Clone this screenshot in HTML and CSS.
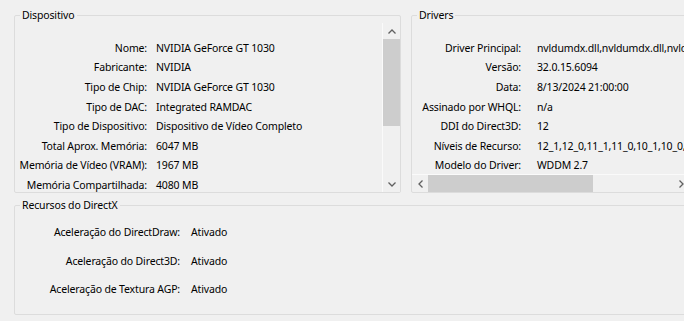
FILE: index.html
```html
<!DOCTYPE html>
<html lang="pt-BR">
<head>
    <meta charset="UTF-8">
    <title>Vídeo</title>
    <link rel="stylesheet" href="styles.css">
</head>
<body>
    <div class="dialog">
        <div class="top">
            <fieldset class="group device">
                <legend>Dispositivo</legend>
                <div class="panel">
                    <div class="rows">
                        <span class="key">Nome:</span><span class="val">NVIDIA GeForce GT 1030</span>
                        <span class="key">Fabricante:</span><span class="val">NVIDIA</span>
                        <span class="key">Tipo de Chip:</span><span class="val">NVIDIA GeForce GT 1030</span>
                        <span class="key">Tipo de DAC:</span><span class="val">Integrated RAMDAC</span>
                        <span class="key">Tipo de Dispositivo:</span><span class="val">Dispositivo de Vídeo Completo</span>
                        <span class="key">Total Aprox. Memória:</span><span class="val">6047 MB</span>
                        <span class="key">Memória de Vídeo (VRAM):</span><span class="val">1967 MB</span>
                        <span class="key">Memória Compartilhada:</span><span class="val">4080 MB</span>
                    </div>
                    <div class="vscroll">
                        <div class="arrow">
                            <svg width="8" height="5" viewBox="0 0 8 5"><path d="M0.5 4.5 L4 1 L7.5 4.5" fill="none" stroke="#606060" stroke-width="1.3"/></svg>
                        </div>
                        <div class="track"><div class="thumb"></div></div>
                        <div class="arrow">
                            <svg width="8" height="5" viewBox="0 0 8 5"><path d="M0.5 0.5 L4 4 L7.5 0.5" fill="none" stroke="#606060" stroke-width="1.3"/></svg>
                        </div>
                    </div>
                </div>
            </fieldset>

            <fieldset class="group drivers">
                <legend>Drivers</legend>
                <div class="panel stack">
                    <div class="rows">
                        <span class="key">Driver Principal:</span><span class="val">nvldumdx.dll,nvldumdx.dll,nvldumdx.dll,nvldumdx.dll</span>
                        <span class="key">Versão:</span><span class="val">32.0.15.6094</span>
                        <span class="key">Data:</span><span class="val">8/13/2024 21:00:00</span>
                        <span class="key">Assinado por WHQL:</span><span class="val">n/a</span>
                        <span class="key">DDI do Direct3D:</span><span class="val">12</span>
                        <span class="key">Níveis de Recurso:</span><span class="val">12_1,12_0,11_1,11_0,10_1,10_0,9_3,9_2,9_1</span>
                        <span class="key">Modelo do Driver:</span><span class="val">WDDM 2.7</span>
                    </div>
                    <div class="hscroll">
                        <div class="arrow">
                            <svg width="5" height="8" viewBox="0 0 5 8"><path d="M4.5 0.5 L1 4 L4.5 7.5" fill="none" stroke="#606060" stroke-width="1.3"/></svg>
                        </div>
                        <div class="track"><div class="thumb"></div></div>
                        <div class="arrow">
                            <svg width="5" height="8" viewBox="0 0 5 8"><path d="M0.5 0.5 L4 4 L0.5 7.5" fill="none" stroke="#606060" stroke-width="1.3"/></svg>
                        </div>
                    </div>
                </div>
            </fieldset>
        </div>

        <fieldset class="group dx">
            <legend>Recursos do DirectX</legend>
            <div class="rows">
                <span class="key">Aceleração do DirectDraw:</span><span class="val">Ativado</span>
                <span class="key">Aceleração do Direct3D:</span><span class="val">Ativado</span>
                <span class="key">Aceleração de Textura AGP:</span><span class="val">Ativado</span>
            </div>
        </fieldset>
    </div>
</body>
</html>
```

FILE: styles.css
```css
body {
    margin: 0;
    background-color: #f0f0f0;
    color: #000;
    font-family: "Noto Sans", "Open Sans", sans-serif;
    font-size: 10.5px;
    letter-spacing: -0.15px;
    overflow: hidden;
}
.dialog {
    width: 700px;
    padding: 8px 0 0 14px;
}
.top {
    display: flex;
    gap: 10px;
}
.group {
    box-sizing: border-box;
    margin: 0;
    padding: 0;
    min-width: 0;
    border: 1px solid #dcdcdc;
    border-radius: 2px;
}
legend {
    margin-left: 5px;
    padding: 0 2px;
    line-height: 15px;
}
.panel {
    display: flex;
    height: 169px;
}
.stack {
    flex-direction: column;
}
.rows {
    display: grid;
    grid-auto-rows: 19.6px;
    align-items: center;
    align-content: start;
    white-space: nowrap;
    overflow: hidden;
}
.key {
    text-align: right;
}

/* Dispositivo */
.device {
    width: 387px;
}
.device .rows {
    flex: 1;
    grid-template-columns: 132px auto;
    column-gap: 9px;
    padding-top: 15px;
}
.vscroll {
    width: 17px;
    display: flex;
    flex-direction: column;
    background-color: #f0f0f0;
    border-left: 1px solid #fafafa;
}
.vscroll .arrow {
    height: 16px;
    display: flex;
    align-items: center;
    justify-content: center;
}
.vscroll .track {
    flex: 1;
}
.vscroll .thumb {
    height: 87px;
    background-color: #cdcdcd;
}

/* Drivers */
.drivers {
    width: 279px;
}
.drivers .rows {
    flex: 1;
    grid-template-columns: 109px auto;
    column-gap: 16px;
    padding-top: 15px;
}
.hscroll {
    height: 17px;
    display: flex;
    border-top: 1px solid #fafafa;
}
.hscroll .arrow {
    width: 16px;
    display: flex;
    align-items: center;
    justify-content: center;
}
.hscroll .track {
    flex: 1;
}
.hscroll .thumb {
    width: 165px;
    height: 100%;
    background-color: #cdcdcd;
}

/* Recursos do DirectX */
.dx {
    width: 676px;
    margin-top: 5px;
}
.dx .rows {
    height: 101px;
    box-sizing: border-box;
    grid-template-columns: 165px auto;
    column-gap: 11px;
    grid-auto-rows: 28.6px;
    padding-top: 5px;
}
```
